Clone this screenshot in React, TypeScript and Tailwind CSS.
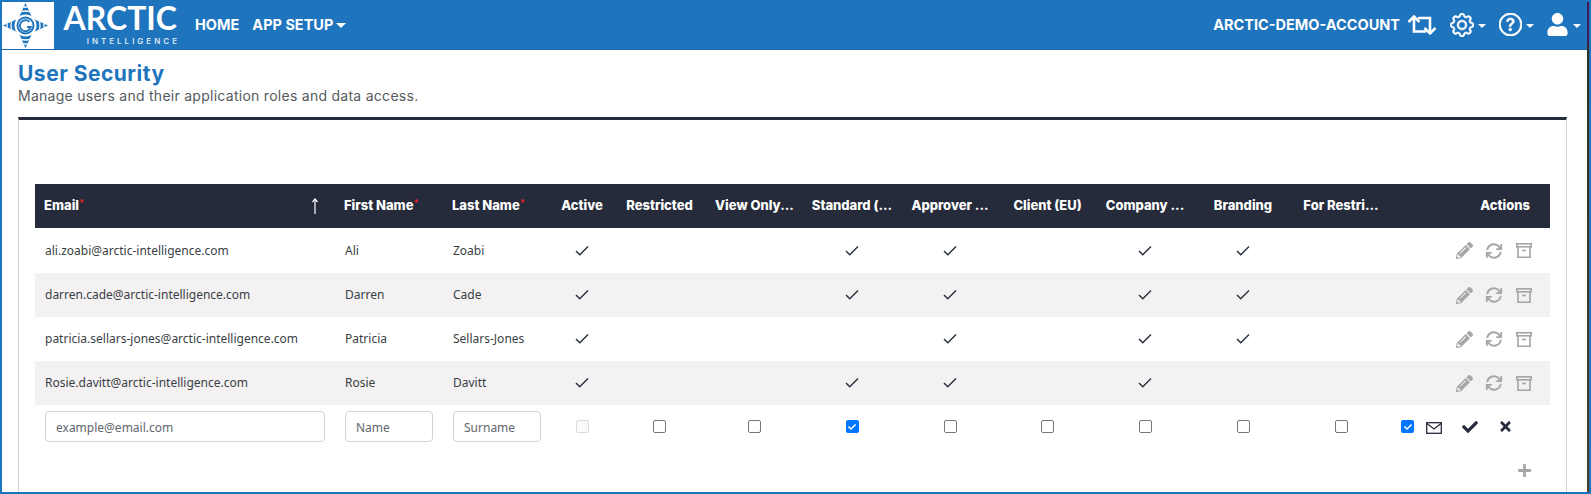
import React from "react";
import { BsQuestionCircle, BsGear } from "react-icons/bs";
import { FaCheck, FaPencilAlt, FaPlus, FaTimes, FaUser } from "react-icons/fa";

const COLS = "grid grid-cols-[300px_108px_108px_62px_93px_97px_98px_98px_97px_98px_98px_98px_160px] items-center";
const HEAD_FONT = "font-['Inter','Liberation_Sans',sans-serif]";

const headers = ["Active", "Restricted", "View Only...", "Standard (...", "Approver ...", "Client (EU)", "Company ...", "Branding", "For Restri..."];

type Row = { email: string; first: string; last: string; checks: boolean[] };
const rows: Row[] = [
  { email: "ali.zoabi@arctic-intelligence.com", first: "Ali", last: "Zoabi", checks: [true, false, false, true, true, false, true, true, false] },
  { email: "darren.cade@arctic-intelligence.com", first: "Darren", last: "Cade", checks: [true, false, false, true, true, false, true, true, false] },
  { email: "patricia.sellars-jones@arctic-intelligence.com", first: "Patricia", last: "Sellars-Jones", checks: [true, false, false, false, true, false, true, true, false] },
  { email: "Rosie.davitt@arctic-intelligence.com", first: "Rosie", last: "Davitt", checks: [true, false, false, true, true, false, true, false, false] },
];

function Caret() {
  return <span className="ml-[4px] mt-[3px] inline-block h-0 w-0 border-x-[4px] border-t-[4px] border-x-transparent border-t-white" />;
}

function Logo() {
  const star = "M23.5 1 L30.5 16.5 L46 23.5 L30.5 30.5 L23.5 46 L16.5 30.5 L1 23.5 L16.5 16.5 Z";
  return (
    <svg viewBox="0 0 47 47" className="h-[47px] w-[47px]">
      <defs>
        <clipPath id="star">
          <path d={star} />
        </clipPath>
      </defs>
      <path d={star} fill="#1e74bd" />
      <g clipPath="url(#star)" fill="none" stroke="white" strokeWidth="1.3">
        <circle cx="23.5" cy="23.5" r="18.5" />
        <circle cx="23.5" cy="23.5" r="14.5" />
      </g>
      <circle cx="23.5" cy="23.5" r="11" fill="white" />
      <circle cx="23.5" cy="23.5" r="9" fill="#1e74bd" />
      <circle cx="23.5" cy="23.5" r="7" fill="white" />
      <path d="M27.5 20 A5.5 5.5 0 1 0 28.8 25 L25 25" fill="none" stroke="#1e74bd" strokeWidth="1.8" />
    </svg>
  );
}

function Retweet() {
  return (
    <svg viewBox="0 0 30 22" className="ml-[7px] h-[22px] w-[30px]" fill="none" stroke="white" strokeWidth="2.6">
      <path d="M1.5 8 L7 2.5 L12.5 8" />
      <path d="M7 3 V17.5 H19" />
      <path d="M11 4 H23 V19" />
      <path d="M17.5 14 L23 19.5 L28.5 14" />
    </svg>
  );
}

function Refresh() {
  return (
    <svg viewBox="0 0 24 24" className="h-[18px] w-[18px]" fill="none" stroke="currentColor" strokeWidth="2.6">
      <path d="M3 11 A9 9 0 0 1 19 6.5 L21 9" />
      <path d="M21.5 3 V9.5 H15" />
      <path d="M21 13 A9 9 0 0 1 5 17.5 L3 15" />
      <path d="M2.5 21 V14.5 H9" />
    </svg>
  );
}

function ArchiveBox() {
  return (
    <svg viewBox="0 0 16 15" className="ml-[1px] h-[15px] w-[16px]" fill="none" stroke="currentColor" strokeWidth="1.6">
      <rect x="0.8" y="0.8" width="14.4" height="3" />
      <path d="M2 4 V14.2 H14 V4" />
      <path d="M6 7.5 H10" />
    </svg>
  );
}

function Envelope() {
  return (
    <svg viewBox="0 0 16 12" className="ml-[12px] mt-[3px] h-[12px] w-[16px]" fill="none" stroke="currentColor" strokeWidth="1.3">
      <rect x="0.7" y="0.7" width="14.6" height="10.6" />
      <path d="M1 1.5 L8 7 L15 1.5" />
    </svg>
  );
}

function SortArrow() {
  return (
    <svg viewBox="0 0 8 16" className="h-[16px] w-[8px]" fill="none" stroke="white" strokeWidth="1.2">
      <path d="M4 1 V16" />
      <path d="M1.5 4 L4 1 L6.5 4" />
    </svg>
  );
}

function Tick() {
  return (
    <svg viewBox="0 0 24 24" className="h-[18px] w-[18px] text-[#2b3240]" fill="none" stroke="currentColor" strokeWidth="2">
      <path d="M20 6 L9 17 L4 12" />
    </svg>
  );
}

function Box({ checked, disabled }: { checked?: boolean; disabled?: boolean }) {
  if (checked) {
    return (
      <span className="flex h-[13px] w-[13px] items-center justify-center rounded-[2px] bg-[#0075ff] text-white">
        <FaCheck className="h-[8px] w-[8px]" />
      </span>
    );
  }
  return (
    <span className={`block h-[13px] w-[13px] rounded-[2px] border ${disabled ? "border-[#dcdcdc] bg-[#fafafa]" : "border-[#767676] bg-white"}`} />
  );
}

const INPUT = "h-[31px] w-full rounded-[4px] border border-[#ced4da] bg-white px-[10px] pt-[1px] text-[12px] outline-none placeholder:text-[#5f666d]";

export default function App() {
  return (
    <div className="flex h-[494px] w-[1591px] overflow-hidden bg-[#1e74bd]">
      <div className="flex w-[1587px] flex-col border-b-2 border-l-2 border-[#1e74bd] bg-white">
        <header className={`flex h-[50px] shrink-0 items-center border-b border-[#1a68aa] bg-[#1e74bd] text-white ${HEAD_FONT}`}>
          <div className="mt-[2px] flex h-[47px] w-[52px] items-center justify-start bg-white">
            <Logo />
          </div>
          <div className="ml-[5px] flex w-[118px] flex-col items-end">
            <span className="my-[-4px] whitespace-nowrap font-['Lato',sans-serif] text-[32px] leading-[34px] font-bold">ARCTIC</span>
            <span className="mt-[6px] mr-[-3px] whitespace-nowrap text-[8px] leading-[8px] font-semibold tracking-[3px] text-[#dbe8f4]">INTELLIGENCE</span>
          </div>
          <nav className="ml-[18px] flex items-center gap-[13px] text-[14.5px] font-bold">
            <span>HOME</span>
            <span className="flex items-center">APP SETUP<span className="ml-[3px] mt-[1px] inline-block h-0 w-0 border-x-[5px] border-t-[5px] border-x-transparent border-t-white" /></span>
          </nav>
          <div className="ml-auto flex items-center pr-[6px]">
            <span className="text-[14.5px] font-bold">ARCTIC-DEMO-ACCOUNT</span>
            <Retweet />
            <BsGear className="ml-[13px] h-[24px] w-[24px] stroke-[0.5px]" />
            <Caret />
            <BsQuestionCircle className="ml-[13px] h-[23px] w-[23px] stroke-[0.5px]" />
            <Caret />
            <FaUser className="ml-[12px] h-[23px] w-[23px]" />
            <Caret />
          </div>
        </header>

        <main className="flex min-h-0 flex-1 flex-col pl-[16px] pr-[20px]">
          <h1 className={`mt-[11px] text-[21px] leading-[26px] font-bold tracking-[0.5px] text-[#1e74bd] ${HEAD_FONT}`}>User Security</h1>
          <p className={`text-[14px] leading-[18px] tracking-[0.27px] text-[#555b60] ${HEAD_FONT}`}>Manage users and their application roles and data access.</p>

          <section className="mt-[12px] flex-1 border-x border-t-[3px] border-x-[#d4d4d4] border-t-[#252b3b] pl-[16px] pr-[16px] pt-[64px] font-['Noto_Sans',sans-serif] text-[12px] text-[#3a3f45]">
            <div className={`${COLS} h-[44px] bg-[#252b3b] text-[13px] font-extrabold text-white ${HEAD_FONT}`}>
              <div className="flex items-center justify-between pl-[9px] pr-[16px]">
                <span>Email<sup className="text-[9px] text-[#e02020]">*</sup></span>
                <SortArrow />
              </div>
              <div className="pl-[9px] whitespace-nowrap">First Name<sup className="text-[9px] text-[#e02020]">*</sup></div>
              <div className="pl-[9px] whitespace-nowrap">Last Name<sup className="text-[9px] text-[#e02020]">*</sup></div>
              {headers.map((h) => (
                <div key={h} className="whitespace-nowrap text-center">{h}</div>
              ))}
              <div className="pr-[20px] text-right">Actions</div>
            </div>

            {rows.map((r, i) => (
              <div key={r.email} className={`${COLS} ${i === 0 ? "h-[45px]" : "h-[44px]"} ${i % 2 === 1 ? "bg-[#f3f1f2]" : "bg-white"}`}>
                <div className="pl-[10px]">{r.email}</div>
                <div className="pl-[10px]">{r.first}</div>
                <div className="pl-[10px]">{r.last}</div>
                {r.checks.map((c, j) => (
                  <div key={j} className="flex justify-center">
                    {c && <Tick />}
                  </div>
                ))}
                <div className="flex items-center justify-end gap-[12px] pr-[18px] text-[#a6a6a6]">
                  <FaPencilAlt className="h-[17px] w-[17px]" />
                  <Refresh />
                  <ArchiveBox />
                </div>
              </div>
            ))}

            <div className={`${COLS} mt-[6px] h-[31px]`}>
              <div className="pl-[10px] pr-[10px]">
                <input readOnly placeholder="example@email.com" className={INPUT} />
              </div>
              <div className="pl-[10px] pr-[10px]">
                <input readOnly placeholder="Name" className={INPUT} />
              </div>
              <div className="pl-[10px] pr-[10px]">
                <input readOnly placeholder="Surname" className={INPUT} />
              </div>
              <div className="flex justify-center"><Box disabled /></div>
              <div className="flex justify-center"><Box /></div>
              <div className="flex justify-center"><Box /></div>
              <div className="flex justify-center"><Box checked /></div>
              <div className="flex justify-center"><Box /></div>
              <div className="flex justify-center"><Box /></div>
              <div className="flex justify-center"><Box /></div>
              <div className="flex justify-center"><Box /></div>
              <div className="flex justify-center"><Box /></div>
              <div className="flex items-center pl-[11px] text-[#252b3b]">
                <Box checked />
                <Envelope />
                <FaCheck className="ml-[20px] h-[16px] w-[16px]" />
                <FaTimes className="ml-[20px] h-[15px] w-[15px]" />
              </div>
            </div>

            <div className="mt-[21px] flex justify-end pr-[18px] text-[#a6a6a6]">
              <FaPlus className="h-[15px] w-[15px]" />
            </div>
          </section>
        </main>
      </div>
      <div className="my-[2px] w-[2px] bg-[linear-gradient(to_bottom,#3e1d58_0,#3e1d58_38px,#2f3020_48px,#4a3d2c_100%)]" />
    </div>
  );
}
